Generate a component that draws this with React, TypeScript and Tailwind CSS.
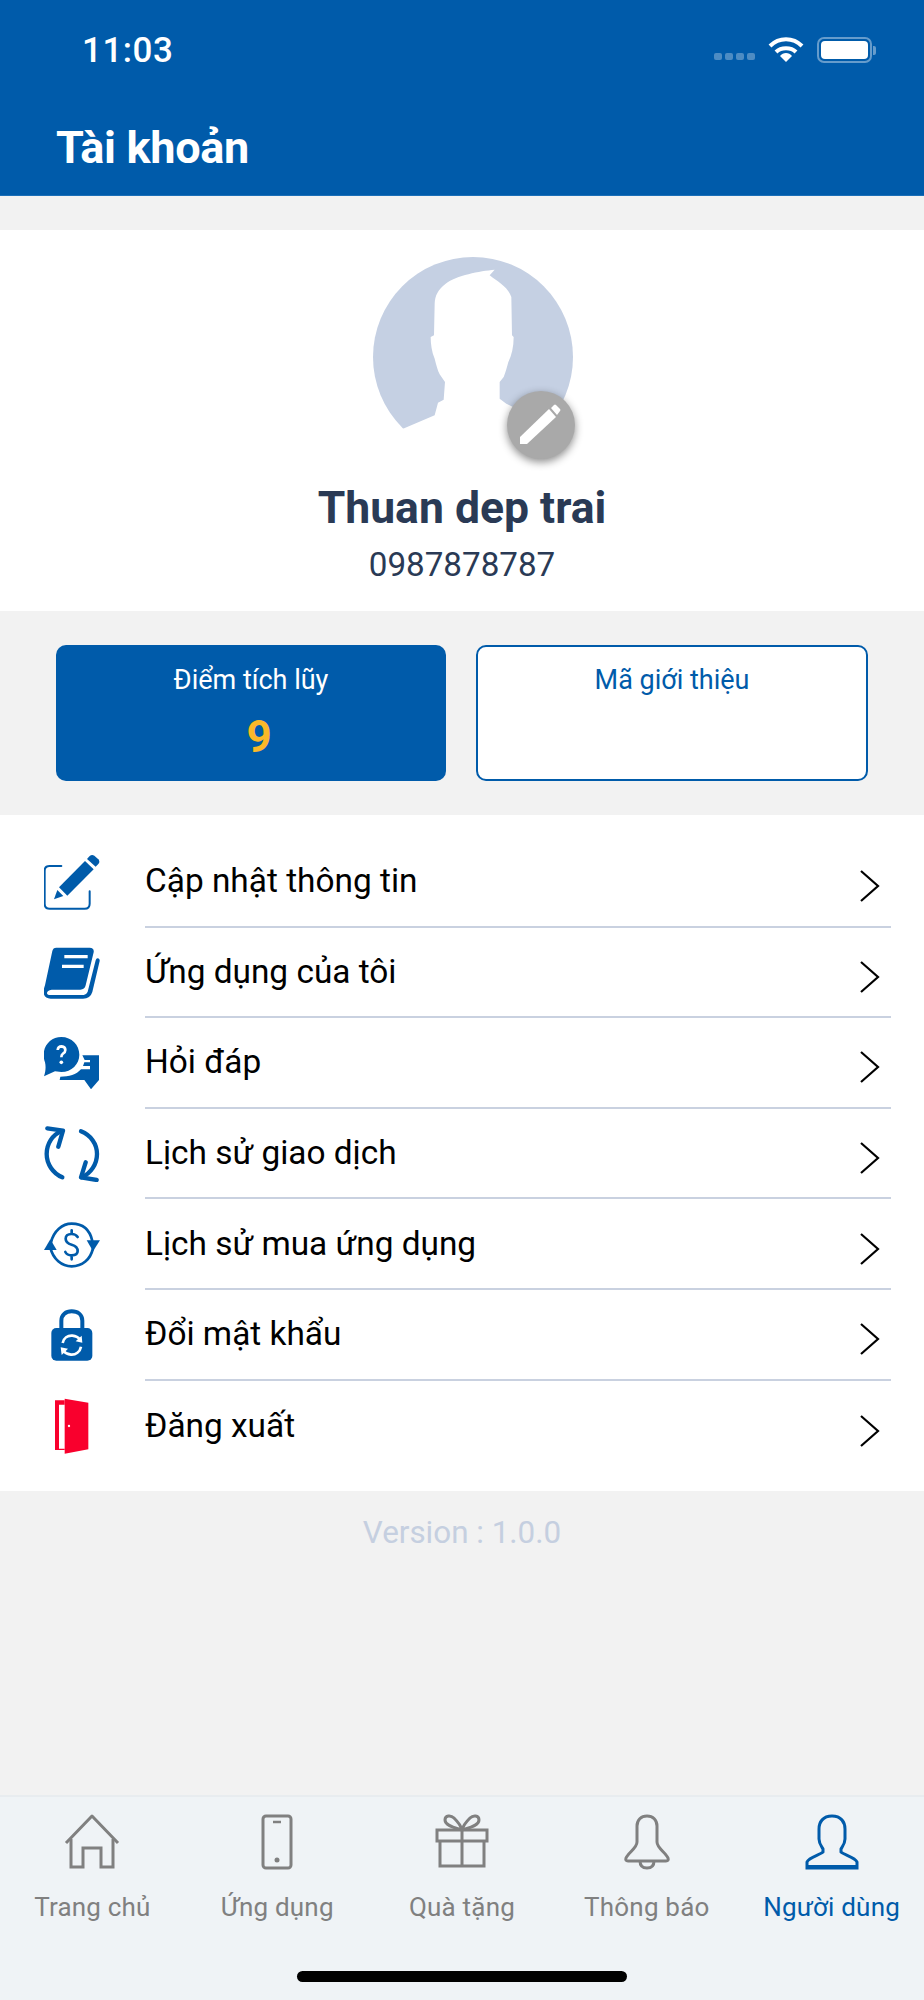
const BLUE = '#005baa';

function Avatar() {
  return (
    <svg viewBox="220 50 600 600" className="w-[200px] h-[200px]">
      <circle cx="520" cy="350" r="300" fill="#c5d0e3" />
      <path
        d="M585 88 C540 92 470 105 438 130 C415 148 406 165 405 190 L403 285 L393 290 C393 310 396 335 405 355 C410 375 414 390 420 402 L436 425 L432 478 L415 487 L405 525 L310 565 L220 600 L220 660 L830 660 L830 560 L700 530 L620 490 L600 475 L600 425 L612 410 C618 395 622 380 626 365 C636 345 642 320 642 290 L637 285 L635 170 C625 140 595 125 570 105 Z"
        fill="#ffffff"
      />
    </svg>
  );
}

function EditIcon() {
  return (
    <svg viewBox="75 72 168 168" className="w-[56px] h-[56px]">
      <path d="M127 108 H92 Q77 108 77 122 V221 Q77 236 92 236 H197 Q212 236 212 221 V184" fill="none" stroke={BLUE} strokeWidth="6" strokeLinecap="round" />
      <path d="M105 208 L115 180 L133 198 Z" fill={BLUE} />
      <path d="M120 172 L198 93 L224 118 L145 197 Z" fill={BLUE} />
      <path d="M204 87 L212 78 Q219 72 226 77 L238 88 Q244 95 238 102 L230 110 Z" fill={BLUE} />
    </svg>
  );
}

function BookIcon() {
  return (
    <svg viewBox="75 344 168 168" className="w-[56px] h-[56px]">
      <path d="M112 352 H212 Q226 352 224 366 L200 465 Q197 478 184 478 H98 Q84 480 84 488 Q84 494 94 494 H188 Q202 494 206 484 L230 390 Q232 383 237 384 Q243 386 242 392 L220 485 Q214 505 192 505 H95 Q76 505 74 488 Q73 478 78 465 L100 362 Q102 352 112 352 Z" fill={BLUE} />
      <path d="M136 379 H206 M129 408 H194" stroke="#ffffff" strokeWidth="10" />
    </svg>
  );
}

function ChatIcon() {
  return (
    <svg viewBox="75 613 168 168" className="w-[56px] h-[56px]">
      <path d="M127 619 C158 619 181 643 181 672 C181 700 158 724 127 724 L108 722 L75 737 C80 722 81 708 78 695 C75 688 74 680 74 672 C74 643 97 619 127 619 Z" fill={BLUE} />
      <path d="M116 658 Q117 647 128 647 Q139 648 139 658 Q139 665 132 669 Q127 672 127 680" fill="none" stroke="#ffffff" strokeWidth="8" />
      <circle cx="127" cy="695" r="5.5" fill="#ffffff" />
      <path d="M190 674 H240 V748 L216 776 L196 748 H122 L124 738 C150 738 172 732 186 716 H213 V706 H192 L196 695 H213 V688 H197 Z" fill={BLUE} />
    </svg>
  );
}

function SyncIcon() {
  return (
    <svg viewBox="75 46 168 168" className="w-[56px] h-[56px]">
      <path d="M128 62 C100 72 83 100 83 130 C83 160 102 188 130 200" fill="none" stroke={BLUE} strokeWidth="13" strokeLinecap="round" />
      <path d="M85 53 L132 60 L118 108" fill="none" stroke={BLUE} strokeWidth="13" strokeLinecap="round" strokeLinejoin="round" />
      <path d="M186 62 C216 74 234 100 234 130 C234 160 216 188 188 200" fill="none" stroke={BLUE} strokeWidth="13" strokeLinecap="round" />
      <path d="M233 208 L186 200 L200 155" fill="none" stroke={BLUE} strokeWidth="13" strokeLinecap="round" strokeLinejoin="round" />
    </svg>
  );
}

function MoneyIcon() {
  return (
    <svg viewBox="75 316 168 168" className="w-[56px] h-[56px]">
      <path d="M96 392 C104 358 130 336 158 336 C188 336 212 352 220 388" fill="none" stroke={BLUE} strokeWidth="8" />
      <path d="M94 408 C102 442 128 464 158 464 C190 464 214 444 222 410" fill="none" stroke={BLUE} strokeWidth="8" />
      <path d="M75 415 L113 415 L94 383 Z" fill={BLUE} />
      <path d="M203 386 L243 386 L222 419 Z" fill={BLUE} />
      <path d="M176 376 Q170 367 158 367 Q140 367 140 381 Q140 394 158 399 Q176 404 176 418 Q176 431 158 431 Q144 431 139 421 M158 356 V367 M158 431 V443" fill="none" stroke={BLUE} strokeWidth="8" strokeLinecap="round" />
    </svg>
  );
}

function LockIcon() {
  return (
    <svg viewBox="75 589 168 168" className="w-[56px] h-[56px]">
      <path d="M127 660 V630 C127 612 141 602 158 602 C176 602 190 612 190 630 V660" fill="none" stroke={BLUE} strokeWidth="12" />
      <rect x="97" y="652" width="123" height="98" rx="15" fill={BLUE} />
      <path d="M131 697 C134 682 146 674 160 675 C170 676 178 680 183 687" fill="none" stroke="#ffffff" strokeWidth="8" />
      <path d="M188 675 L190 696 L170 692 Z" fill="#ffffff" />
      <path d="M186 708 C183 724 170 733 156 732 C146 731 138 727 133 720" fill="none" stroke="#ffffff" strokeWidth="8" />
      <path d="M125 710 L147 714 L128 733 Z" fill="#ffffff" />
    </svg>
  );
}

function DoorIcon() {
  return (
    <svg viewBox="75 858 168 168" className="w-[56px] h-[56px]">
      <path d="M108 865 H137 V878 H120 V1010 H137 V1014 H108 Z" fill="#f9002d" />
      <path d="M137 860 L208 872 V1012 L137 1025 Z" fill="#f9002d" />
      <circle cx="150" cy="942" r="3.5" fill="#ffffff" />
    </svg>
  );
}

function Chevron() {
  return (
    <svg viewBox="0 0 22 34" className="w-[22px] h-[34px] mt-[10px] mr-[1px] shrink-0">
      <path d="M2 2 L19 17 L2 32" fill="none" stroke="#000000" strokeWidth="2.2" />
    </svg>
  );
}

function HomeTab() {
  return (
    <svg viewBox="0 0 56 56" className="w-[56px] h-[56px]" fill="none" stroke="currentColor" strokeWidth="3">
      <path d="M2 29 L28 2 L54 29" strokeLinejoin="round" />
      <path d="M7 25 V53 H19 V34 H37 V53 H49 V25" />
    </svg>
  );
}

function PhoneTab() {
  return (
    <svg viewBox="0 0 56 56" className="w-[56px] h-[56px]" fill="none" stroke="currentColor" strokeWidth="3">
      <rect x="14" y="2" width="28" height="52" rx="3" />
      <path d="M24 8 H32" strokeWidth="2.5" />
      <circle cx="28" cy="46" r="2.5" fill="currentColor" stroke="none" />
    </svg>
  );
}

function GiftTab() {
  return (
    <svg viewBox="0 0 56 56" className="w-[56px] h-[56px]" fill="none" stroke="currentColor" strokeWidth="3">
      <rect x="3" y="16" width="50" height="11" />
      <path d="M6 27 V52 H50 V27 M28 16 V52" />
      <path d="M28 16 C22 14 11 12 11 6 C11 1 17 1 20 4 C24 8 27 12 28 16 C29 12 32 8 36 4 C39 1 45 1 45 6 C45 12 34 14 28 16" />
    </svg>
  );
}

function BellTab() {
  return (
    <svg viewBox="0 0 56 56" className="w-[56px] h-[56px]" fill="none" stroke="currentColor" strokeWidth="3">
      <path d="M18 12 C18 6 22 2 28 2 C34 2 38 6 38 12 V28 C38 34 47 39 49 44 Q50 47 47 47 H9 Q6 47 7 44 C9 39 18 34 18 28 Z" />
      <path d="M21 47 C21 52 24 54 28 54 C32 54 35 52 35 47" />
    </svg>
  );
}

function UserTab() {
  return (
    <svg viewBox="0 0 56 56" className="w-[56px] h-[56px]" fill="none" stroke="currentColor" strokeWidth="3">
      <path d="M28 2 C19 2 15 8 15 15 V25 C15 30 18 33 19 35 V38 C16 41 5 43 3 48 V54 H53 V48 C51 43 40 41 37 38 V35 C38 33 41 30 41 25 V15 C41 8 37 2 28 2 Z" />
      <path d="M3 53 H53" strokeWidth="4" />
    </svg>
  );
}

const menu = [
  { label: 'Cập nhật thông tin', icon: <EditIcon /> },
  { label: 'Ứng dụng của tôi', icon: <BookIcon /> },
  { label: 'Hỏi đáp', icon: <ChatIcon /> },
  { label: 'Lịch sử giao dịch', icon: <SyncIcon /> },
  { label: 'Lịch sử mua ứng dụng', icon: <MoneyIcon /> },
  { label: 'Đổi mật khẩu', icon: <LockIcon /> },
  { label: 'Đăng xuất', icon: <DoorIcon /> },
];

const tabs = [
  { label: 'Trang chủ', icon: <HomeTab /> },
  { label: 'Ứng dụng', icon: <PhoneTab /> },
  { label: 'Quà tặng', icon: <GiftTab /> },
  { label: 'Thông báo', icon: <BellTab /> },
  { label: 'Người dùng', icon: <UserTab />, active: true },
];

export default function App() {
  return (
    <div className="w-[924px] h-[2000px] flex flex-col bg-[#f2f2f2] font-['Roboto',sans-serif] overflow-hidden">
      <header className="h-[196px] shrink-0 bg-[#005baa] text-white flex flex-col border-b border-[#1b6fb8]">
        <div className="h-[100px] flex items-center pl-[82px] pr-[48px] justify-between">
          <span className="text-[35px] font-medium leading-none tracking-[0.5px]">11:03</span>
          <div className="flex items-center">
            <div className="flex gap-[3px] mt-[13px] mr-[13px]">
              <span className="w-[8px] h-[7px] rounded-[2px] bg-white/30" />
              <span className="w-[8px] h-[7px] rounded-[2px] bg-white/30" />
              <span className="w-[8px] h-[7px] rounded-[2px] bg-white/30" />
              <span className="w-[8px] h-[7px] rounded-[2px] bg-white/30" />
            </div>
            <svg viewBox="0 0 36 26" className="w-[36px] h-[26px] mr-[13px]" fill="none" stroke="#ffffff" strokeWidth="4">
              <path d="M2 9 C11 0 25 0 34 9" />
              <path d="M8 15 C13 10 23 10 28 15" />
              <path d="M12 19 L18 25 L24 19 C21 15 15 15 12 19 Z" fill="#ffffff" stroke="none" />
            </svg>
            <div className="w-[55px] h-[26px] rounded-[7px] border-2 border-white/40 p-[2px]">
              <div className="w-full h-full rounded-[4px] bg-white" />
            </div>
            <div className="w-[3px] h-[9px] rounded-r-[2px] bg-white/40 ml-[1px]" />
          </div>
        </div>
        <h1 className="mt-[22px] pl-[56px] text-[45px] font-bold leading-[52px] tracking-[-0.3px]">Tài khoản</h1>
      </header>

      <section className="mt-[34px] h-[381px] shrink-0 bg-white flex flex-col items-center pt-[27px]">
        <div className="relative ml-[22px] w-[200px] h-[200px]">
          <Avatar />
          <div className="absolute left-[134px] top-[134px] w-[68px] h-[68px] rounded-full bg-[#a9a9a9] shadow-[0_3px_8px_rgba(0,0,0,0.45)]">
            <svg viewBox="0 0 68 68" className="w-[68px] h-[68px]" fill="#ffffff">
              <path d="M13 46 L42 18 L49 26 L20 53 L13 53 Z" />
              <path d="M44 17 L47 14 Q48 13 49 14 L53 18 Q54 19 53 20 L50 24 Z" />
            </svg>
          </div>
        </div>
        <h2 className="mt-[25px] text-[44.5px] leading-[52px] font-bold text-[#2a3a55]">Thuan dep trai</h2>
        <p className="mt-[11px] text-[33.2px] leading-[40px] text-[#2a3a55]">0987878787</p>
      </section>

      <section className="h-[204px] shrink-0 flex gap-[30px] px-[56px] pt-[34px]">
        <div className="w-[390px] h-[136px] rounded-[10px] bg-[#005baa] flex flex-col items-center pt-[17px]">
          <span className="text-[27px] leading-[36px] text-white">Điểm tích lũy</span>
          <span className="mt-[13px] ml-[16px] text-[44px] leading-[52px] font-bold text-[#fbb829]">9</span>
        </div>
        <div className="w-[392px] h-[136px] rounded-[10px] border-2 border-[#005baa] bg-white flex flex-col items-center pt-[15px]">
          <span className="text-[27px] leading-[36px] text-[#005baa]">Mã giới thiệu</span>
        </div>
      </section>

      <section className="h-[676px] shrink-0 bg-white pt-[22px]">
        {menu.map((item, i) => (
          <div key={item.label} className="h-[90.6px] flex items-center pl-[44px] pr-[33px]">
            <div className="w-[56px] shrink-0">{item.icon}</div>
            <div className={`ml-[45px] flex-1 h-full flex items-center justify-between pr-[9px] ${i < menu.length - 1 ? 'border-b-2 border-[#c9d1e0]' : ''}`}>
              <span className="text-[33.4px] leading-[40px] text-black">{item.label}</span>
              <Chevron />
            </div>
          </div>
        ))}
      </section>

      <p className="mt-[22px] text-center text-[31.4px] leading-[40px] text-[#c5cfe0]">Version : 1.0.0</p>

      <div className="flex-1" />

      <nav className="h-[205px] shrink-0 bg-[#eff3f6] border-t-2 border-[#e8ecef] flex flex-col">
        <div className="flex pt-[17px]">
          {tabs.map(tab => (
            <div key={tab.label} className={`w-[184.8px] flex flex-col items-center ${tab.active ? 'text-[#005baa]' : 'text-[#808080]'}`}>
              {tab.icon}
              <span className="mt-[20px] text-[26px] leading-[34px] tracking-[0.2px] whitespace-nowrap">{tab.label}</span>
            </div>
          ))}
        </div>
        <div className="mt-auto mb-[18px] mx-auto w-[330px] h-[11px] rounded-full bg-black" />
      </nav>
    </div>
  );
}
